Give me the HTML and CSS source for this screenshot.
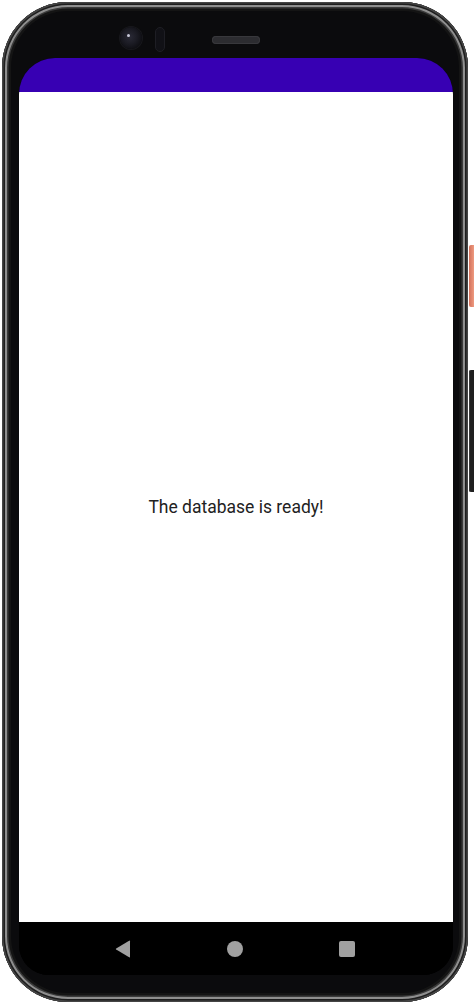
FILE: index.html
```html
<!DOCTYPE html>
<html lang="en">
<head>
<meta charset="utf-8">
<title>Database</title>
<link rel="stylesheet" href="styles.css">
</head>
<body>
<div class="page">
  <div class="phone">
    <div class="top-bezel">
      <div class="camera"><span class="lens"></span></div>
      <div class="sensor"></div>
      <div class="speaker"></div>
    </div>
    <div class="screen">
      <div class="status-bar"></div>
      <main class="content">
        <p class="message">The database is ready!</p>
      </main>
      <nav class="nav-bar">
        <svg class="nav-icon" width="16" height="18" viewBox="0 0 16 18"><path d="M15 1.2 L15 16.8 Q15 17.8 14.1 17.3 L1.2 9.6 Q0.3 9 1.2 8.4 L14.1 0.7 Q15 0.2 15 1.2 Z" fill="#a0a0a0"/></svg>
        <span class="nav-home"></span>
        <span class="nav-recent"></span>
      </nav>
    </div>
  </div>
  <span class="btn-power"></span>
  <span class="btn-volume"></span>
</div>
</body>
</html>
```

FILE: styles.css
```css
html, body {
  margin: 0;
  padding: 0;
  background: #ffffff;
}

.page {
  position: relative;
  width: 474px;
  height: 1004px;
  overflow: hidden;
  background: #ffffff;
}

.phone {
  margin: 2px 0 0 2px;
  width: 466px;
  height: 1000px;
  box-sizing: border-box;
  border-radius: 66px;
  background: #0b0b0d;
  box-shadow:
    inset 0 0 0 1.5px #454545,
    inset 0 0 0 3px #1e1e1e,
    inset 0 0 0 5px #8e8e8e,
    inset 0 0 0 6.5px #3a3a3a,
    inset 0 0 0 9px #141414;
  display: flex;
  flex-direction: column;
}

.top-bezel {
  height: 56px;
  flex: none;
  box-sizing: border-box;
  padding: 25px 0 0 118px;
  display: flex;
  align-items: flex-start;
}

.camera {
  width: 22px;
  height: 22px;
  border-radius: 50%;
  background: radial-gradient(circle at 45% 45%, #2a2a36 0%, #1a1a22 45%, #101015 70%, #1c1c22 100%);
  box-shadow: 0 0 0 1px #18181c;
  position: relative;
}

.lens {
  position: absolute;
  left: 7px;
  top: 7px;
  width: 3px;
  height: 3px;
  border-radius: 50%;
  background: #c8c8d8;
}

.sensor {
  margin: 0 0 0 13px;
  width: 10px;
  height: 25px;
  box-sizing: border-box;
  border-radius: 5px;
  border: 1px solid #1e1e24;
  background: #111116;
}

.speaker {
  margin: 9px 0 0 47px;
  width: 48px;
  height: 8px;
  border-radius: 4px;
  background: #2c2c30;
  box-shadow: inset 0 0 0 1px #38383c;
}

.screen {
  margin-left: 17px;
  width: 434px;
  height: 917px;
  flex: none;
  border-radius: 36px 36px 30px 30px;
  overflow: hidden;
  display: flex;
  flex-direction: column;
  background: #000000;
}

.status-bar {
  height: 34px;
  flex: none;
  background: #3700b3;
}

.content {
  flex: 1;
  background: #ffffff;
  display: flex;
  align-items: center;
  justify-content: center;
}

.message {
  margin: 0;
  font-family: Roboto, "Noto Sans", sans-serif;
  font-size: 17.5px;
  color: #222222;
  letter-spacing: 0;
}

.nav-bar {
  height: 53px;
  flex: none;
  background: #000000;
  display: flex;
  align-items: center;
  justify-content: center;
  gap: 96px;
}

.nav-icon {
  display: block;
  margin-left: -2px;
}

.nav-home {
  width: 16px;
  height: 16px;
  border-radius: 50%;
  background: #a0a0a0;
}

.nav-recent {
  width: 16px;
  height: 16px;
  border-radius: 2px;
  background: #a0a0a0;
}

.btn-power {
  position: absolute;
  left: 469px;
  top: 245px;
  width: 5px;
  height: 62px;
  border-radius: 2px 0 0 2px;
  background: linear-gradient(90deg, #d2705a, #ee9a80);
}

.btn-volume {
  position: absolute;
  left: 469px;
  top: 370px;
  width: 5px;
  height: 122px;
  border-radius: 2px 0 0 2px;
  background: #1f1f1f;
  box-shadow: inset 1px 0 0 #3a3a3a;
}
```
